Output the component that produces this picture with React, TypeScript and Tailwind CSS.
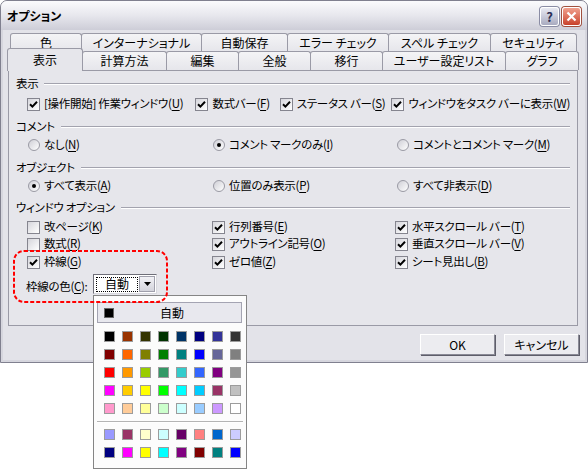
import React from "react";

const F = "font-['Noto_Sans_CJK_JP','Noto_Sans_CJK_SC',sans-serif] [font-feature-settings:'palt']";

function Mn({ t, m }: { t: string; m: string }) {
  return (
    <span className="whitespace-nowrap text-[11.5px] tracking-[-0.3px] leading-none text-black">
      {t}(<span className="underline underline-offset-[2px]">{m}</span>)
    </span>
  );
}

function Check({ on, t, m }: { on: boolean; t: string; m: string }) {
  return (
    <div className="flex items-center gap-[4px] h-[16px]">
      <div className="w-[13px] h-[13px] shrink-0 border border-[#85858f] bg-linear-to-br from-[#d6d6dc] to-white flex items-center justify-center">
        {on && (
          <svg width="9" height="9" viewBox="0 0 9 9">
            <path d="M1 4.2 L3.4 6.6 L8 1.8" stroke="black" strokeWidth="2" fill="none" />
          </svg>
        )}
      </div>
      <Mn t={t} m={m} />
    </div>
  );
}

function Radio({ on, t, m }: { on: boolean; t: string; m: string }) {
  return (
    <div className="flex items-center gap-[4px] h-[16px]">
      <div className="w-[12px] h-[12px] shrink-0 rounded-full border border-[#9a9aa4] bg-linear-to-br from-[#cfcfd6] to-white flex items-center justify-center">
        {on && <div className="w-[4px] h-[4px] rounded-full bg-black" />}
      </div>
      <Mn t={t} m={m} />
    </div>
  );
}

function Group({ label }: { label: string }) {
  return (
    <div className="flex items-center h-[16px]">
      <span className="text-[11.5px] tracking-[-0.3px] leading-none text-black whitespace-nowrap">{label}</span>
      <div className="flex-1 ml-[6px] h-[2px] border-t border-t-[#a3a3ae] border-b border-b-white" />
    </div>
  );
}

function Tab({ w, label }: { w: string; label: string }) {
  return (
    <div
      className={`${w} h-full -ml-px first:ml-0 border-t border-l border-r border-[#9a9aa6] rounded-t-[3px] bg-linear-to-b from-[#f4f4f6] to-[#e6e6eb] flex items-center justify-center text-[12px] leading-none text-black whitespace-nowrap`}
    >
      {label}
    </div>
  );
}

const palette1 = [
  ["#000000", "#993300", "#333300", "#003300", "#003366", "#000080", "#333399", "#333333"],
  ["#800000", "#FF6600", "#808000", "#008000", "#008080", "#0000FF", "#666699", "#808080"],
  ["#FF0000", "#FF9900", "#99CC00", "#339966", "#33CCCC", "#3366FF", "#800080", "#969696"],
  ["#FF00FF", "#FFCC00", "#FFFF00", "#00FF00", "#00FFFF", "#00CCFF", "#993366", "#C0C0C0"],
  ["#FF99CC", "#FFCC99", "#FFFF99", "#CCFFCC", "#CCFFFF", "#99CCFF", "#CC99FF", "#FFFFFF"],
];
const palette2 = [
  ["#9999FF", "#993366", "#FFFFCC", "#CCFFFF", "#660066", "#FF8080", "#0066CC", "#CCCCFF"],
  ["#000080", "#FF00FF", "#FFFF00", "#00FFFF", "#800080", "#800000", "#008080", "#0000FF"],
];

function Swatches({ rows }: { rows: string[][] }) {
  return (
    <div className="grid grid-cols-[repeat(8,11px)] gap-[7px] pl-[7px]">
      {rows.flat().map((c, i) => (
        <div key={i} className="w-[11px] h-[11px] border border-[#9c9c9c]" style={{ backgroundColor: c }} />
      ))}
    </div>
  );
}

export default function App() {
  return (
    <div className={`${F} relative w-[588px] h-[475px] bg-white overflow-hidden text-black`}>
      {/* Window */}
      <div className="w-[588px] h-[363px] rounded-t-[7px] border border-[#80808f] bg-[#d6d6de] flex flex-col">
        {/* Title bar */}
        <div className="h-[29px] shrink-0 rounded-t-[6px] bg-linear-to-b from-[#fbfbfd] via-[#e7e7ed] to-[#cdcdd7] flex items-center pl-[6px] pr-[6px]">
          <span className="text-[12px] font-bold leading-none">オプション</span>
          <div className="ml-auto flex items-center gap-[2px] mt-[1px]">
            <div className="w-[19px] h-[19px] rounded-[3px] border border-white bg-linear-to-b from-[#e8e9f2] to-[#a9abc0] shadow-[0_0_0_1px_#8a8ca4] flex items-center justify-center">
              <span className="text-[13px] font-bold leading-none text-[#2b2f55]">?</span>
            </div>
            <div className="w-[19px] h-[19px] ml-[1px] rounded-[3px] border border-white bg-linear-to-b from-[#f0a08e] to-[#c8402a] shadow-[0_0_0_1px_#a0503e] flex items-center justify-center">
              <svg width="11" height="11" viewBox="0 0 11 11">
                <path d="M1.5 1.5 L9.5 9.5 M9.5 1.5 L1.5 9.5" stroke="white" strokeWidth="2.2" />
              </svg>
            </div>
          </div>
        </div>
        {/* Client */}
        <div className="flex-1 mx-[2px] mb-[2px] bg-[#e3e3e9] pl-[5px] pt-[3px] flex flex-col">
          {/* Tab row 1 */}
          <div className="flex h-[18px] ml-[2px]">
            <Tab w="w-[72px]" label="色" />
            <Tab w="w-[121px]" label="インターナショナル" />
            <Tab w="w-[87px]" label="自動保存" />
            <Tab w="w-[102px]" label="エラー チェック" />
            <Tab w="w-[103px]" label="スペル チェック" />
            <Tab w="w-[87px]" label="セキュリティ" />
          </div>
          {/* Tab row 2 */}
          <div className="flex h-[19px] items-start">
            <div className="relative z-10 w-[76px] h-[23px] -mt-[3px] -ml-px border-t border-l border-r border-[#9a9aa6] rounded-t-[3px] bg-[#e6e6eb] flex items-center justify-center text-[12px] leading-none">
              表示
            </div>
            <div className="flex h-[19px] -ml-px">
              <Tab w="w-[85px]" label="計算方法" />
              <Tab w="w-[73px]" label="編集" />
              <Tab w="w-[73px]" label="全般" />
              <Tab w="w-[73px]" label="移行" />
              <Tab w="w-[124px]" label="ユーザー設定リスト" />
              <Tab w="w-[74px]" label="グラフ" />
            </div>
          </div>
          {/* Panel */}
          <div className="w-[570px] h-[256px] border border-[#9a9aa6] bg-[#e6e6eb] pl-[7px] pr-[7px] pt-[5px] flex flex-col">
            <Group label="表示" />
            <div className="flex mt-[4px] pl-[11px]">
              <div className="w-[172px]"><Check on t="[操作開始] 作業ウィンドウ" m="U" /></div>
              <div className="w-[86px]"><Check on t="数式バー" m="F" /></div>
              <div className="w-[114px]"><Check on t="ステータス バー" m="S" /></div>
              <div><Check on t="ウィンドウをタスク バーに表示" m="W" /></div>
            </div>
            <div className="mt-[7px]"><Group label="コメント" /></div>
            <div className="flex mt-[2px] pl-[12px]">
              <div className="w-[185px]"><Radio on={false} t="なし" m="N" /></div>
              <div className="w-[184px]"><Radio on t="コメント マークのみ" m="I" /></div>
              <div><Radio on={false} t="コメントとコメント マーク" m="M" /></div>
            </div>
            <div className="mt-[7px]"><Group label="オブジェクト" /></div>
            <div className="flex mt-[2px] pl-[12px]">
              <div className="w-[185px]"><Radio on t="すべて表示" m="A" /></div>
              <div className="w-[184px]"><Radio on={false} t="位置のみ表示" m="P" /></div>
              <div><Radio on={false} t="すべて非表示" m="D" /></div>
            </div>
            <div className="mt-[6px]"><Group label="ウィンドウ オプション" /></div>
            <div className="flex mt-[3px] pl-[11px]">
              <div className="w-[185px]"><Check on={false} t="改ページ" m="K" /></div>
              <div className="w-[183px]"><Check on t="行列番号" m="E" /></div>
              <div><Check on t="水平スクロール バー" m="T" /></div>
            </div>
            <div className="flex mt-[1px] pl-[11px]">
              <div className="w-[185px]"><Check on={false} t="数式" m="R" /></div>
              <div className="w-[183px]"><Check on t="アウトライン記号" m="O" /></div>
              <div><Check on t="垂直スクロール バー" m="V" /></div>
            </div>
            <div className="flex mt-[2px] pl-[11px]">
              <div className="w-[185px]"><Check on t="枠線" m="G" /></div>
              <div className="w-[183px]"><Check on t="ゼロ値" m="Z" /></div>
              <div><Check on t="シート見出し" m="B" /></div>
            </div>
            <div className="flex items-center mt-[4px] pl-[10px] h-[20px]">
              <div className="w-[67px]"><span className="text-[11.5px] tracking-[-0.3px] leading-none whitespace-nowrap">枠線の色(<span className="underline underline-offset-[2px]">C</span>):</span></div>
              <div className="w-[64px] h-[20px] border border-t-[#6e6e78] border-l-[#6e6e78] border-r-[#d8d8de] border-b-[#d8d8de] bg-white flex items-center pl-[2px] pr-[1px]">
                <div className="w-[42px] h-[15px] border border-dotted border-black flex items-center justify-center text-[12px] leading-none">自動</div>
                <div className="ml-auto w-[16px] h-[16px] border border-[#a0a0ac] bg-linear-to-b from-[#f2f2f6] to-[#d4d4dc] flex items-center justify-center">
                  <svg width="7" height="4" viewBox="0 0 7 4"><path d="M0 0 H7 L3.5 4 Z" fill="black" /></svg>
                </div>
              </div>
            </div>
          </div>
          {/* Buttons */}
          <div className="flex justify-end gap-[9px] mt-[8px] pr-[6px]">
            <div className="w-[75px] h-[21px] border border-t-white border-l-white border-r-[#8a8a96] border-b-[#8a8a96] shadow-[1px_1px_0_#5e5e6a] bg-[#ececf0] flex items-center justify-center text-[12px] leading-none">OK</div>
            <div className="w-[75px] h-[21px] border border-t-white border-l-white border-r-[#8a8a96] border-b-[#8a8a96] shadow-[1px_1px_0_#5e5e6a] bg-[#ececf0] flex items-center justify-center text-[12px] leading-none">キャンセル</div>
          </div>
        </div>
      </div>

      {/* Color popup */}
      <div className="absolute left-[93px] top-[295px] w-[154px] h-[174px] border border-[#858585] bg-[#fcfcfc] flex flex-col px-[3px] pt-[6px]">
        <div className="h-[21px] w-[145px] border border-[#a4a4b2] bg-[#e8e8ee] flex items-center pl-[6px]">
          <div className="w-[10px] h-[10px] bg-black border border-[#666]" />
          <span className="ml-[46px] text-[12px] leading-none">自動</span>
        </div>
        <div className="mt-[8px]"><Swatches rows={palette1} /></div>
        <div className="mt-[7px] h-[2px] border-t border-t-[#b4b4b4] border-b border-b-white" />
        <div className="mt-[6px]"><Swatches rows={palette2} /></div>
      </div>

      {/* Red dashed annotation */}
      <svg className="absolute left-[12px] top-[249px]" width="158" height="56" viewBox="0 0 158 56">
        <rect x="2" y="2" width="153" height="51" rx="10" ry="10" fill="none" stroke="#ff0000" strokeWidth="2" strokeDasharray="4 2" />
      </svg>
    </div>
  );
}
